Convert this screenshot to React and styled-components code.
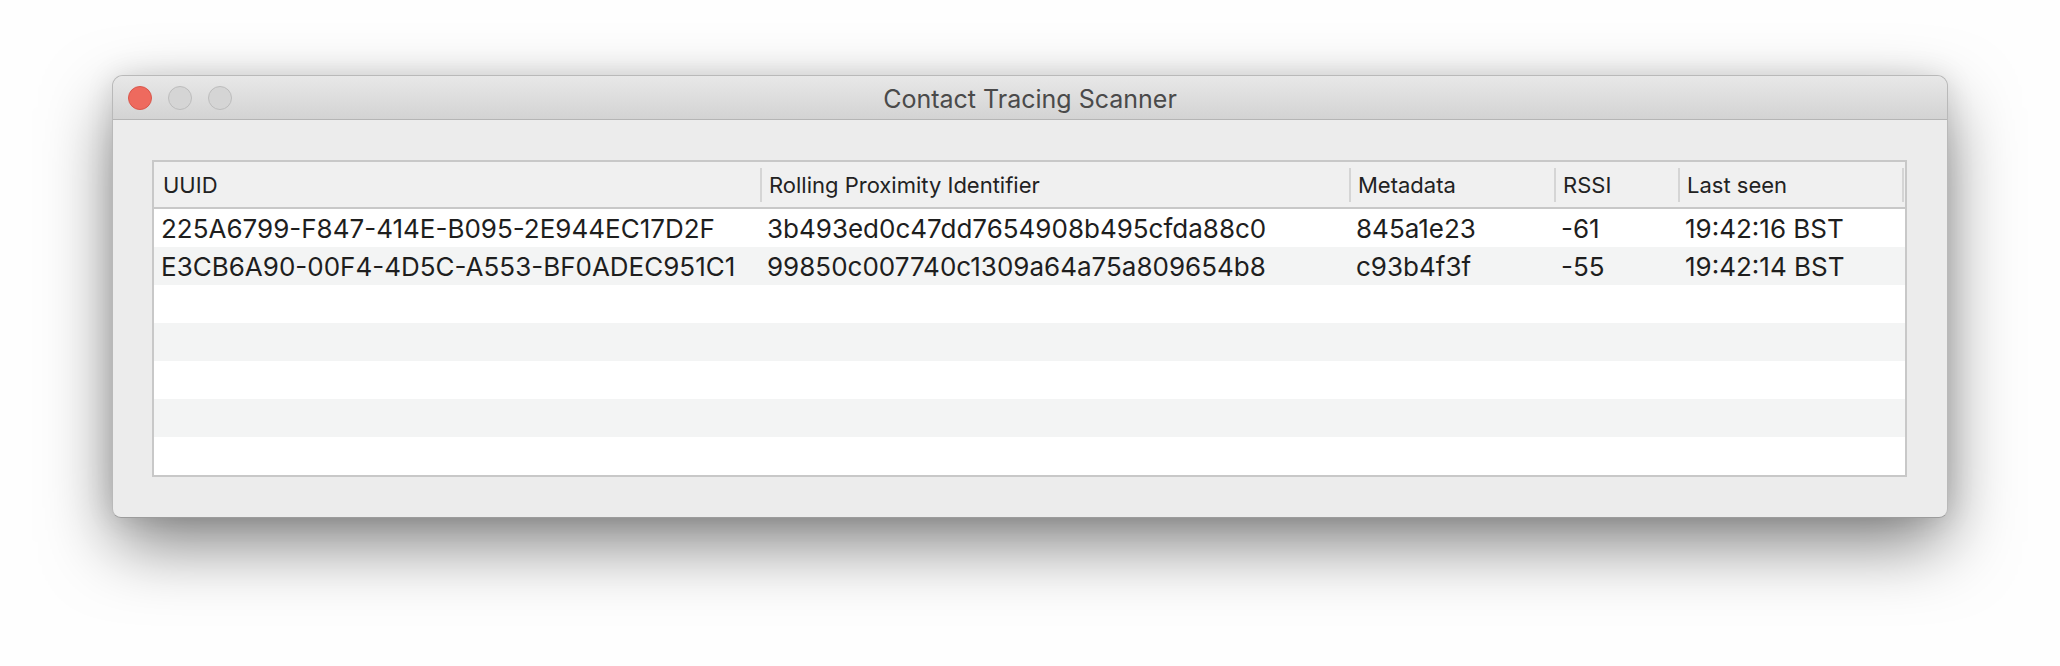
import React from "react";
import styled, { createGlobalStyle } from "styled-components";

const columns = [
  { key: "uuid", title: "UUID", width: "606px" },
  { key: "rpi", title: "Rolling Proximity Identifier", width: "589px" },
  { key: "meta", title: "Metadata", width: "205px" },
  { key: "rssi", title: "RSSI", width: "124px" },
  { key: "seen", title: "Last seen", width: "1fr" },
];

const rows = [
  {
    uuid: "225A6799-F847-414E-B095-2E944EC17D2F",
    rpi: "3b493ed0c47dd7654908b495cfda88c0",
    meta: "845a1e23",
    rssi: "-61",
    seen: "19:42:16 BST",
  },
  {
    uuid: "E3CB6A90-00F4-4D5C-A553-BF0ADEC951C1",
    rpi: "99850c007740c1309a64a75a809654b8",
    meta: "c93b4f3f",
    rssi: "-55",
    seen: "19:42:14 BST",
  },
];

const EMPTY_ROWS = 5;
const gridCols = columns.map((c) => c.width).join(" ");

const App = () => {
  const filler = Array.from({ length: EMPTY_ROWS });
  return (
    <>
      <GlobalStyle />
      <Desktop>
        <Window>
          <TitleBar>
            <Lights>
              <Light $color="close" />
              <Light />
              <Light />
            </Lights>
            <Title>Contact Tracing Scanner</Title>
          </TitleBar>
          <Content>
            <Table>
              <HeaderRow>
                {columns.map((c, i) => (
                  <HeaderCell key={c.key} $first={i === 0} $last={i === columns.length - 1}>
                    {c.title}
                  </HeaderCell>
                ))}
              </HeaderRow>
              {rows.map((r, i) => (
                <Row key={r.uuid} $alt={i % 2 === 1}>
                  {columns.map((c) => (
                    <Cell key={c.key}>{r[c.key]}</Cell>
                  ))}
                </Row>
              ))}
              {filler.map((_, i) => (
                <Row key={"empty" + i} $alt={(rows.length + i) % 2 === 1} />
              ))}
            </Table>
          </Content>
        </Window>
      </Desktop>
    </>
  );
};

export default App;

const GlobalStyle = createGlobalStyle`
  html, body {
    margin: 0;
    padding: 0;
    background: #ffffff;
  }
  body {
    font-family: Inter, "Liberation Sans", sans-serif;
    -webkit-font-smoothing: antialiased;
  }
`;

const Desktop = styled.div`
  width: 2060px;
  height: 666px;
  padding: 75px 112px 0 112px;
  box-sizing: border-box;
  background: #fefefe;
  overflow: hidden;
`;

const Window = styled.div`
  width: 1836px;
  height: 443px;
  box-sizing: border-box;
  display: flex;
  flex-direction: column;
  background: #ececec;
  border: 1px solid #b9b9b9;
  border-bottom-color: #9c9c9c;
  border-radius: 11px 11px 9px 9px;
  overflow: hidden;
  box-shadow: 0 28px 70px -4px rgba(0, 0, 0, 0.52),
    0 0 28px rgba(0, 0, 0, 0.1);
`;

const TitleBar = styled.div`
  height: 43px;
  flex-shrink: 0;
  display: grid;
  grid-template-columns: 1fr auto 1fr;
  align-items: center;
  background: linear-gradient(#e8e8e8, #d3d3d3);
  border-bottom: 1px solid #b5b5b5;
`;

const Lights = styled.div`
  display: flex;
  gap: 16px;
  padding-left: 15px;
`;

const Light = styled.span`
  width: 24px;
  height: 24px;
  box-sizing: border-box;
  border-radius: 50%;
  background: ${(p) => (p.$color === "close" ? "#ee6a5e" : "#d5d5d5")};
  border: 1px solid ${(p) => (p.$color === "close" ? "#d8574c" : "#bcbcbc")};
`;

const Title = styled.div`
  font-family: Inter, "Liberation Sans", sans-serif;
  font-size: 25px;
  color: #4a4a4a;
  padding-top: 2px;
`;

const Content = styled.div`
  flex: 1;
  padding: 40px 40px 40px 39px;
  display: flex;
`;

const Table = styled.div`
  flex: 1;
  display: flex;
  flex-direction: column;
  border: 2px solid #c8c8c8;
  background: #ffffff;
`;

const HeaderRow = styled.div`
  display: grid;
  grid-template-columns: ${gridCols};
  height: 45px;
  background: #f0f0f0;
  border-bottom: 2px solid #c8c8c8;
`;

const sep = "linear-gradient(#d5d5d5, #d5d5d5)";

const HeaderCell = styled.div`
  display: flex;
  align-items: center;
  padding-left: 9px;
  font-size: 22px;
  color: #222222;
  white-space: nowrap;
  background: ${(p) =>
    p.$first
      ? "none"
      : p.$last
      ? `${sep} left center / 2px 34px no-repeat, ${sep} right 1px center / 2px 34px no-repeat`
      : `${sep} left center / 2px 34px no-repeat`};
`;

const Row = styled.div`
  display: grid;
  grid-template-columns: ${gridCols};
  height: 38px;
  flex-shrink: 0;
  background: ${(p) => (p.$alt ? "#f3f4f4" : "#ffffff")};
`;

const Cell = styled.div`
  display: flex;
  align-items: center;
  padding-left: 7px;
  font-size: 26px;
  color: #1e1e1e;
  white-space: nowrap;
  overflow: hidden;
`;
